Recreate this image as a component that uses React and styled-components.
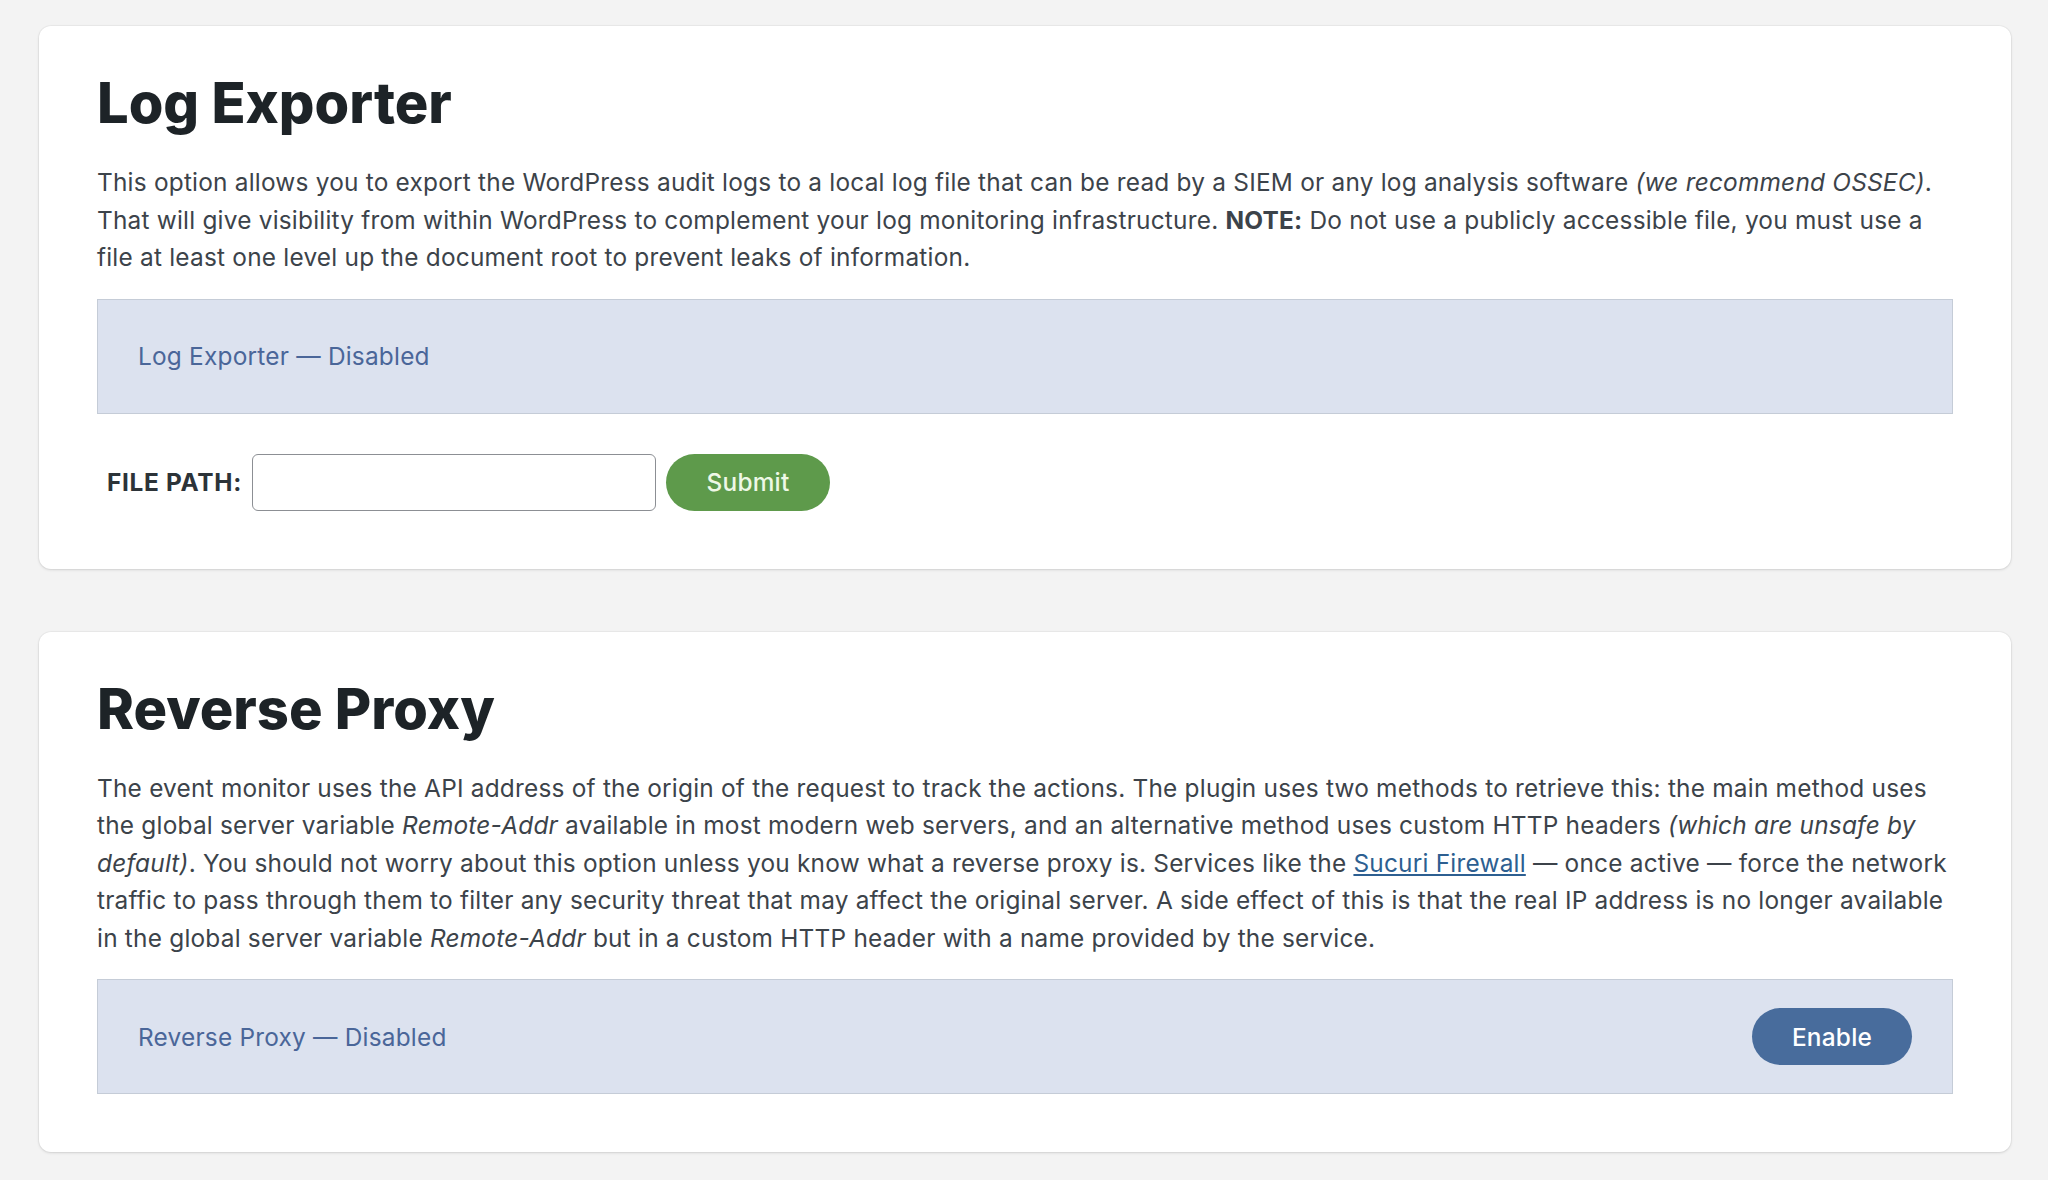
import React from "react";
import styled, { createGlobalStyle } from "styled-components";

const GlobalStyle = createGlobalStyle`
  html, body { margin: 0; padding: 0; }
  body {
    background: #f3f3f3;
    font-family: Inter, "Noto Sans", sans-serif;
    -webkit-font-smoothing: antialiased;
  }
`;

const Page = styled.div`
  display: flex;
  flex-direction: column;
  gap: 63px;
  padding: 26px 37px 27px 39px;
`;

const Card = styled.section`
  background: #fff;
  border-radius: 12px;
  box-shadow: 0 1px 3px rgba(0, 0, 0, 0.12), 0 0 0 1px rgba(0, 0, 0, 0.03);
  padding: 44px 58px 58px;
`;

const Title = styled.h2`
  margin: 0;
  font-size: 56px;
  line-height: 67px;
  font-weight: 800;
  color: #1d2327;
`;

const Text = styled.p`
  margin: 27px 0 0;
  font-size: 24.4px;
  letter-spacing: 0.22px;
  line-height: 37.5px;
  color: #3c434a;
`;

const Notice = styled.div`
  margin-top: 22px;
  min-height: 115px;
  box-sizing: border-box;
  display: flex;
  align-items: center;
  justify-content: space-between;
  padding: 0 40px;
  background: #dce2ef;
  border: 1px solid #c5ccd7;
  color: #4a6699;
  font-size: 24.4px;
  letter-spacing: 0.22px;
`;

const Row = styled.form`
  margin-top: 40px;
  display: flex;
  align-items: center;
  gap: 10px;
  padding-left: 10px;
`;

const Label = styled.label`
  font-size: 24.4px;
  font-weight: 700;
  letter-spacing: 0.7px;
  color: #2c3338;
`;

const Input = styled.input`
  width: 404px;
  height: 57px;
  box-sizing: border-box;
  border: 1px solid #8c8f94;
  border-radius: 6px;
  background: #fff;
`;

const Pill = styled.button`
  height: 57px;
  width: ${(p) => p.$w}px;
  border: none;
  border-radius: 29px;
  background: ${(p) => p.$bg};
  color: ${(p) => p.$fg};
  font-family: inherit;
  font-size: 24.4px;
  letter-spacing: 0.22px;
  font-weight: 500;
  cursor: pointer;
`;

const Link = styled.a`
  color: #2d5f91;
  text-decoration: underline;
`;

export default function App() {
  return (
    <>
      <GlobalStyle />
      <Page>
        <Card>
          <Title>Log Exporter</Title>
          <Text>
            This option allows you to export the WordPress audit logs to a local log file that can be read by a SIEM or
            any log analysis software <em>(we recommend OSSEC)</em>. That will give visibility from within WordPress to
            complement your log monitoring infrastructure. <strong>NOTE:</strong> Do not use a publicly accessible file,
            you must use a file at least one level up the document root to prevent leaks of information.
          </Text>
          <Notice>Log Exporter — Disabled</Notice>
          <Row onSubmit={(e) => e.preventDefault()}>
            <Label>FILE PATH:</Label>
            <Input type="text" />
            <Pill type="submit" $w={164} $bg="#5e9a4b" $fg="#eef8e6">
              Submit
            </Pill>
          </Row>
        </Card>
        <Card>
          <Title>Reverse Proxy</Title>
          <Text>
            The event monitor uses the API address of the origin of the request to track the actions. The plugin uses
            two methods to retrieve this: the main method uses the global server variable <em>Remote-Addr</em> available
            in most modern web servers, and an alternative method uses custom HTTP headers{" "}
            <em>(which are unsafe by default)</em>. You should not worry about this option unless you know what a
            reverse proxy is. Services like the <Link href="#">Sucuri Firewall</Link> — once active — force the network
            traffic to pass through them to filter any security threat that may affect the original server. A side
            effect of this is that the real IP address is no longer available in the global server variable{" "}
            <em>Remote-Addr</em> but in a custom HTTP header with a name provided by the service.
          </Text>
          <Notice>
            Reverse Proxy — Disabled
            <Pill type="button" $w={160} $bg="#486c9c" $fg="#ffffff">
              Enable
            </Pill>
          </Notice>
        </Card>
      </Page>
    </>
  );
}
